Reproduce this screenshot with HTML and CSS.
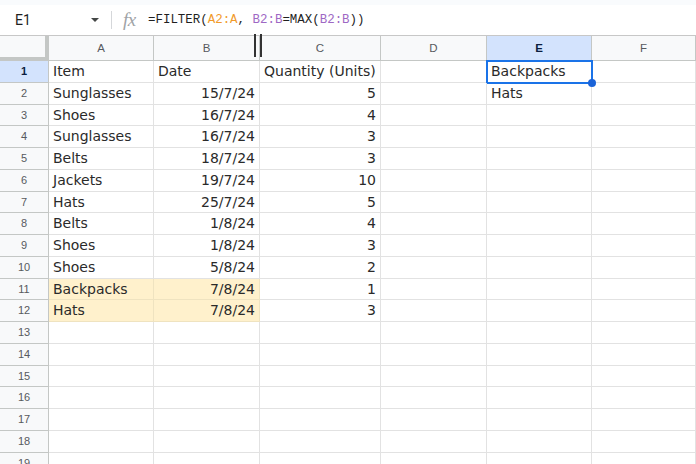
FILE: index.html
```html
<!DOCTYPE html>
<html>
<head>
<meta charset="utf-8">
<link rel="stylesheet" href="styles.css">
</head>
<body>
<div class="topstrip"></div>
<div class="fbar">
  <div class="namebox"><span class="ref">E1</span><span class="caret"></span></div>
  <div class="sep"></div>
  <div class="fx">fx</div>
  <div class="formula">=FILTER(<span class="r1">A2:A</span>, <span class="r2">B2:B</span>=MAX(<span class="r2">B2:B</span>))</div>
</div>
<div class="sheet">
  <div class="corner"></div><div class="ch">A</div><div class="ch colb">B<span class="resize"></span></div><div class="ch">C</div><div class="ch">D</div><div class="ch sel">E</div><div class="ch">F</div>

  <div class="rh sel">1</div><div class="c">Item</div><div class="c">Date</div><div class="c">Quantity (Units)</div><div class="c"></div><div class="c active">Backpacks<span class="dot"></span></div><div class="c"></div>
  <div class="rh">2</div><div class="c">Sunglasses</div><div class="c n">15/7/24</div><div class="c n">5</div><div class="c"></div><div class="c">Hats</div><div class="c"></div>
  <div class="rh">3</div><div class="c">Shoes</div><div class="c n">16/7/24</div><div class="c n">4</div><div class="c"></div><div class="c"></div><div class="c"></div>
  <div class="rh">4</div><div class="c">Sunglasses</div><div class="c n">16/7/24</div><div class="c n">3</div><div class="c"></div><div class="c"></div><div class="c"></div>
  <div class="rh">5</div><div class="c">Belts</div><div class="c n">18/7/24</div><div class="c n">3</div><div class="c"></div><div class="c"></div><div class="c"></div>
  <div class="rh">6</div><div class="c">Jackets</div><div class="c n">19/7/24</div><div class="c n">10</div><div class="c"></div><div class="c"></div><div class="c"></div>
  <div class="rh">7</div><div class="c">Hats</div><div class="c n">25/7/24</div><div class="c n">5</div><div class="c"></div><div class="c"></div><div class="c"></div>
  <div class="rh">8</div><div class="c">Belts</div><div class="c n">1/8/24</div><div class="c n">4</div><div class="c"></div><div class="c"></div><div class="c"></div>
  <div class="rh">9</div><div class="c">Shoes</div><div class="c n">1/8/24</div><div class="c n">3</div><div class="c"></div><div class="c"></div><div class="c"></div>
  <div class="rh">10</div><div class="c">Shoes</div><div class="c n">5/8/24</div><div class="c n">2</div><div class="c"></div><div class="c"></div><div class="c"></div>
  <div class="rh">11</div><div class="c hl">Backpacks</div><div class="c n hl">7/8/24</div><div class="c n">1</div><div class="c"></div><div class="c"></div><div class="c"></div>
  <div class="rh">12</div><div class="c hl">Hats</div><div class="c n hl">7/8/24</div><div class="c n">3</div><div class="c"></div><div class="c"></div><div class="c"></div>
  <div class="rh">13</div><div class="c"></div><div class="c"></div><div class="c"></div><div class="c"></div><div class="c"></div><div class="c"></div>
  <div class="rh">14</div><div class="c"></div><div class="c"></div><div class="c"></div><div class="c"></div><div class="c"></div><div class="c"></div>
  <div class="rh">15</div><div class="c"></div><div class="c"></div><div class="c"></div><div class="c"></div><div class="c"></div><div class="c"></div>
  <div class="rh">16</div><div class="c"></div><div class="c"></div><div class="c"></div><div class="c"></div><div class="c"></div><div class="c"></div>
  <div class="rh">17</div><div class="c"></div><div class="c"></div><div class="c"></div><div class="c"></div><div class="c"></div><div class="c"></div>
  <div class="rh">18</div><div class="c"></div><div class="c"></div><div class="c"></div><div class="c"></div><div class="c"></div><div class="c"></div>
  <div class="rh">19</div><div class="c"></div><div class="c"></div><div class="c"></div><div class="c"></div><div class="c"></div><div class="c"></div>
</div>
</body>
</html>
```
FILE: styles.css
```css
html, body {
  margin: 0;
  padding: 0;
  background: #fff;
}
body {
  width: 696px;
  height: 464px;
  overflow: hidden;
  font-family: "DejaVu Sans", Verdana, sans-serif;
}
.topstrip {
  height: 5px;
  background: #f9fbfd;
}
.fbar {
  height: 30px;
  border-bottom: 1px solid #c7c7c7;
  display: flex;
  align-items: center;
  background: #fff;
}
.namebox {
  width: 99px;
  box-sizing: border-box;
  padding-left: 15px;
  display: flex;
  align-items: center;
  justify-content: space-between;
}
.ref {
  font-family: Roboto, "Liberation Sans", sans-serif;
  font-size: 14px;
  color: #1f1f1f;
}
.caret {
  width: 0;
  height: 0;
  border-left: 4px solid transparent;
  border-right: 4px solid transparent;
  border-top: 4px solid #444746;
}
.sep {
  width: 1px;
  height: 18px;
  background: #d5d7da;
  margin-left: 12px;
}
.fx {
  margin-left: 11px;
  font-family: "Liberation Serif", serif;
  font-style: italic;
  font-size: 19px;
  color: #a0a3a6;
  letter-spacing: -0.5px;
  width: 15px;
  line-height: 20px;
}
.formula {
  margin-left: 10px;
  font-family: "Liberation Mono", monospace;
  font-size: 12.45px;
  color: #1f1f1f;
  white-space: nowrap;
}
.r1 { color: #f19a2b; }
.r2 { color: #9e68c4; }

.sheet {
  display: grid;
  grid-template-columns: 49px 105px 106px 121px 106px 105px 104px;
  grid-template-rows: 25px;
  grid-auto-rows: 21.75px;
}
.corner {
  background: #f8f9fa;
  border-right: 4px solid #c4c7c5;
  border-bottom: 4px solid #c4c7c5;
  box-sizing: border-box;
}
.ch {
  position: relative;
  background: #f8f9fa;
  border-right: 1px solid #c4c7c5;
  border-bottom: 1px solid #c4c7c5;
  box-sizing: border-box;
  text-align: center;
  font-family: "Liberation Sans", Arial, sans-serif;
  font-size: 11.5px;
  line-height: 24px;
  color: #575a5e;
}
.ch.colb {
  z-index: 3;
}
.ch.sel {
  background: #d3e3fd;
  color: #0b1d3f;
  font-weight: bold;
}
.resize {
  position: absolute;
  left: 100px;
  top: -2px;
  width: 8px;
  height: 23px;
  box-sizing: border-box;
  border-left: 2px solid #333;
  border-right: 2px solid #333;
}
.rh {
  background: #f8f9fa;
  border-right: 1px solid #c4c7c5;
  border-bottom: 1px solid #c4c7c5;
  box-sizing: border-box;
  text-align: center;
  font-family: "Liberation Sans", Arial, sans-serif;
  font-size: 11px;
  line-height: 21.5px;
  color: #575a5e;
}
.rh.sel {
  background: #d3e3fd;
  color: #0b1d3f;
  font-weight: bold;
}
.c {
  position: relative;
  border-right: 1px solid #e2e2e2;
  border-bottom: 1px solid #e2e2e2;
  box-sizing: border-box;
  padding: 0 3px 0 4px;
  font-size: 14px;
  line-height: 21.75px;
  color: #2a2a2a;
  white-space: nowrap;
}
.c.n {
  text-align: right;
  padding-right: 4px;
}
.c.hl {
  background: #fff1cc;
  border-color: #efe3c0;
}
.c.active::before {
  content: "";
  position: absolute;
  left: -1px;
  top: -1px;
  right: -2px;
  bottom: -2px;
  border: 2px solid #1a73e8;
  box-sizing: border-box;
}
.dot {
  position: absolute;
  right: -5px;
  bottom: -5px;
  width: 8px;
  height: 8px;
  border-radius: 50%;
  background: #1a63d8;
  z-index: 2;
}
```
